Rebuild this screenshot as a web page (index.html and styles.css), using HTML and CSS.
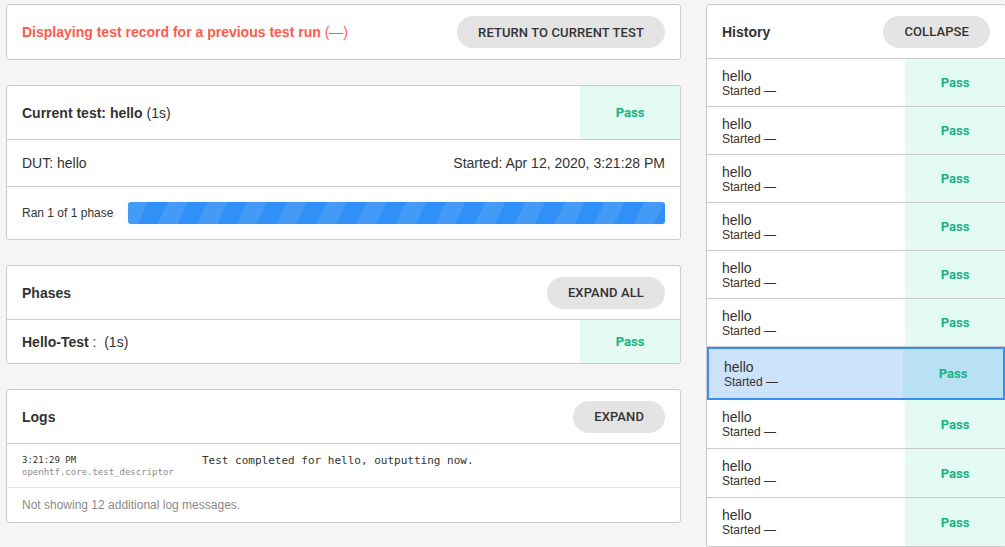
FILE: index.html
```html
<!DOCTYPE html>
<html>
<head>
<meta charset="utf-8">
<link rel="stylesheet" href="styles.css">
</head>
<body>
<div class="page">
  <div class="main">
    <div class="card notice">
      <div class="notice-text"><strong>Displaying test record for a previous test run</strong> (—)</div>
      <button class="btn">Return to current test</button>
    </div>

    <div class="card">
      <div class="row head split">
        <div class="cell-text"><strong>Current test: hello</strong> (1s)</div>
        <div class="pass">Pass</div>
      </div>
      <div class="row dut">
        <span>DUT: hello</span>
        <span>Started: Apr 12, 2020, 3:21:28 PM</span>
      </div>
      <div class="row progress-row">
        <span class="ran">Ran 1 of 1 phase</span>
        <div class="bar"></div>
      </div>
    </div>

    <div class="card">
      <div class="row head">
        <strong>Phases</strong>
        <button class="btn">Expand all</button>
      </div>
      <div class="row phase split">
        <div class="cell-text"><strong>Hello-Test</strong> :&nbsp; (1s)</div>
        <div class="pass">Pass</div>
      </div>
    </div>

    <div class="card">
      <div class="row head">
        <strong>Logs</strong>
        <button class="btn">Expand</button>
      </div>
      <div class="row log">
        <div class="log-meta">
          <div class="log-time">3:21:29 PM</div>
          <div class="log-name">openhtf.core.test_descriptor</div>
        </div>
        <div class="log-msg">Test completed for hello, outputting now.</div>
      </div>
      <div class="row log-foot">Not showing 12 additional log messages.</div>
    </div>
  </div>

  <div class="side">
    <div class="card history">
      <div class="row head">
        <strong>History</strong>
        <button class="btn">Collapse</button>
      </div>
      <div class="hist"><div class="hist-text"><div class="h-name">hello</div><div class="h-start">Started —</div></div><div class="pass">Pass</div></div>
      <div class="hist"><div class="hist-text"><div class="h-name">hello</div><div class="h-start">Started —</div></div><div class="pass">Pass</div></div>
      <div class="hist"><div class="hist-text"><div class="h-name">hello</div><div class="h-start">Started —</div></div><div class="pass">Pass</div></div>
      <div class="hist"><div class="hist-text"><div class="h-name">hello</div><div class="h-start">Started —</div></div><div class="pass">Pass</div></div>
      <div class="hist"><div class="hist-text"><div class="h-name">hello</div><div class="h-start">Started —</div></div><div class="pass">Pass</div></div>
      <div class="hist"><div class="hist-text"><div class="h-name">hello</div><div class="h-start">Started —</div></div><div class="pass">Pass</div></div>
      <div class="hist selected"><div class="hist-text"><div class="h-name">hello</div><div class="h-start">Started —</div></div><div class="pass">Pass</div></div>
      <div class="hist"><div class="hist-text"><div class="h-name">hello</div><div class="h-start">Started —</div></div><div class="pass">Pass</div></div>
      <div class="hist"><div class="hist-text"><div class="h-name">hello</div><div class="h-start">Started —</div></div><div class="pass">Pass</div></div>
      <div class="hist"><div class="hist-text"><div class="h-name">hello</div><div class="h-start">Started —</div></div><div class="pass">Pass</div></div>
    </div>
  </div>
</div>
</body>
</html>
```

FILE: styles.css
```css
html, body {
  margin: 0;
  padding: 0;
  overflow: hidden;
  background: #f5f5f5;
}
body {
  font-family: "Liberation Sans", Arial, sans-serif;
  font-size: 14px;
  color: #333;
}
.page {
  display: flex;
  align-items: flex-start;
  gap: 25px;
  padding: 4px 0 0 6px;
}
.main {
  width: 675px;
  flex: none;
  display: flex;
  flex-direction: column;
  gap: 25px;
}
.side {
  width: 300px;
  flex: none;
}
.card {
  box-sizing: border-box;
  background: #fff;
  border: 1px solid #cbcbcb;
  border-radius: 3px;
  overflow: hidden;
}
.notice {
  height: 56px;
  display: flex;
  align-items: center;
  justify-content: space-between;
  padding: 0 15px;
}
.notice-text {
  color: #ff5a4c;
}
.btn {
  height: 32px;
  border: none;
  border-radius: 16px;
  background: #e4e4e4;
  color: #333;
  font-family: Roboto, "Liberation Sans", sans-serif;
  font-weight: 500;
  font-size: 13px;
  text-transform: uppercase;
  padding: 0 21px;
  letter-spacing: 0.1px;
}
.row {
  display: flex;
  align-items: center;
  justify-content: space-between;
  padding: 0 15px;
  border-bottom: 1px solid #cbcbcb;
}
.row:last-child {
  border-bottom: none;
}
.head {
  height: 53px;
}
.split {
  padding-right: 0;
  align-items: stretch;
}
.cell-text {
  display: flex;
  align-items: center;
  white-space: pre;
}
.pass {
  width: 100px;
  flex: none;
  background: #e3fbf2;
  color: #17b27f;
  font-family: Roboto, "Liberation Sans", sans-serif;
  font-weight: 700;
  font-size: 13px;
  display: flex;
  align-items: center;
  justify-content: center;
}
.dut {
  height: 46px;
}
.progress-row {
  height: 52px;
  justify-content: flex-start;
  gap: 15px;
}
.ran {
  font-size: 12px;
  white-space: nowrap;
}
.bar {
  flex: 1;
  height: 22px;
  border-radius: 3px;
  background-color: #3190f7;
  background-image: repeating-linear-gradient(115deg, rgba(255,255,255,.09) 0 18px, transparent 18px 36px);
  box-shadow: 0 0 4px 2px rgba(60, 130, 240, 0.06);
}
.phase {
  height: 43px;
}
.log {
  height: 44px;
  align-items: flex-start;
  justify-content: flex-start;
  padding-top: 10px;
  box-sizing: border-box;
  border-bottom-color: #e4e4e4;
  font-family: "DejaVu Sans Mono", monospace;
}
.log-meta {
  width: 180px;
  flex: none;
}
.log-time {
  font-size: 9px;
  line-height: 12px;
  color: #333;
}
.log-name {
  font-size: 9px;
  line-height: 12px;
  color: #8a8a8a;
}
.log-msg {
  font-size: 11px;
  line-height: 14px;
  color: #333;
}
.log-foot {
  height: 34px;
  font-size: 12px;
  color: #8a8a8a;
  justify-content: flex-start;
}
.history .head {
  padding-right: 15px;
}
.hist {
  display: flex;
  height: 47px;
  border-bottom: 1px solid #cbcbcb;
}
.hist-text {
  flex: 1;
  padding: 9px 0 0 15px;
}
.h-name {
  font-size: 14px;
  line-height: 16px;
}
.h-start {
  font-size: 12px;
  line-height: 14px;
}
.hist.selected {
  height: 49px;
  border: 2px solid #3a8ef6;
  background: #cde3fb;
}
.hist.selected .hist-text {
  padding-top: 10px;
}
.hist.selected .pass {
  background: #b8e1f3;
}
.hist.selected ~ .hist {
  height: 48px;
}
```
